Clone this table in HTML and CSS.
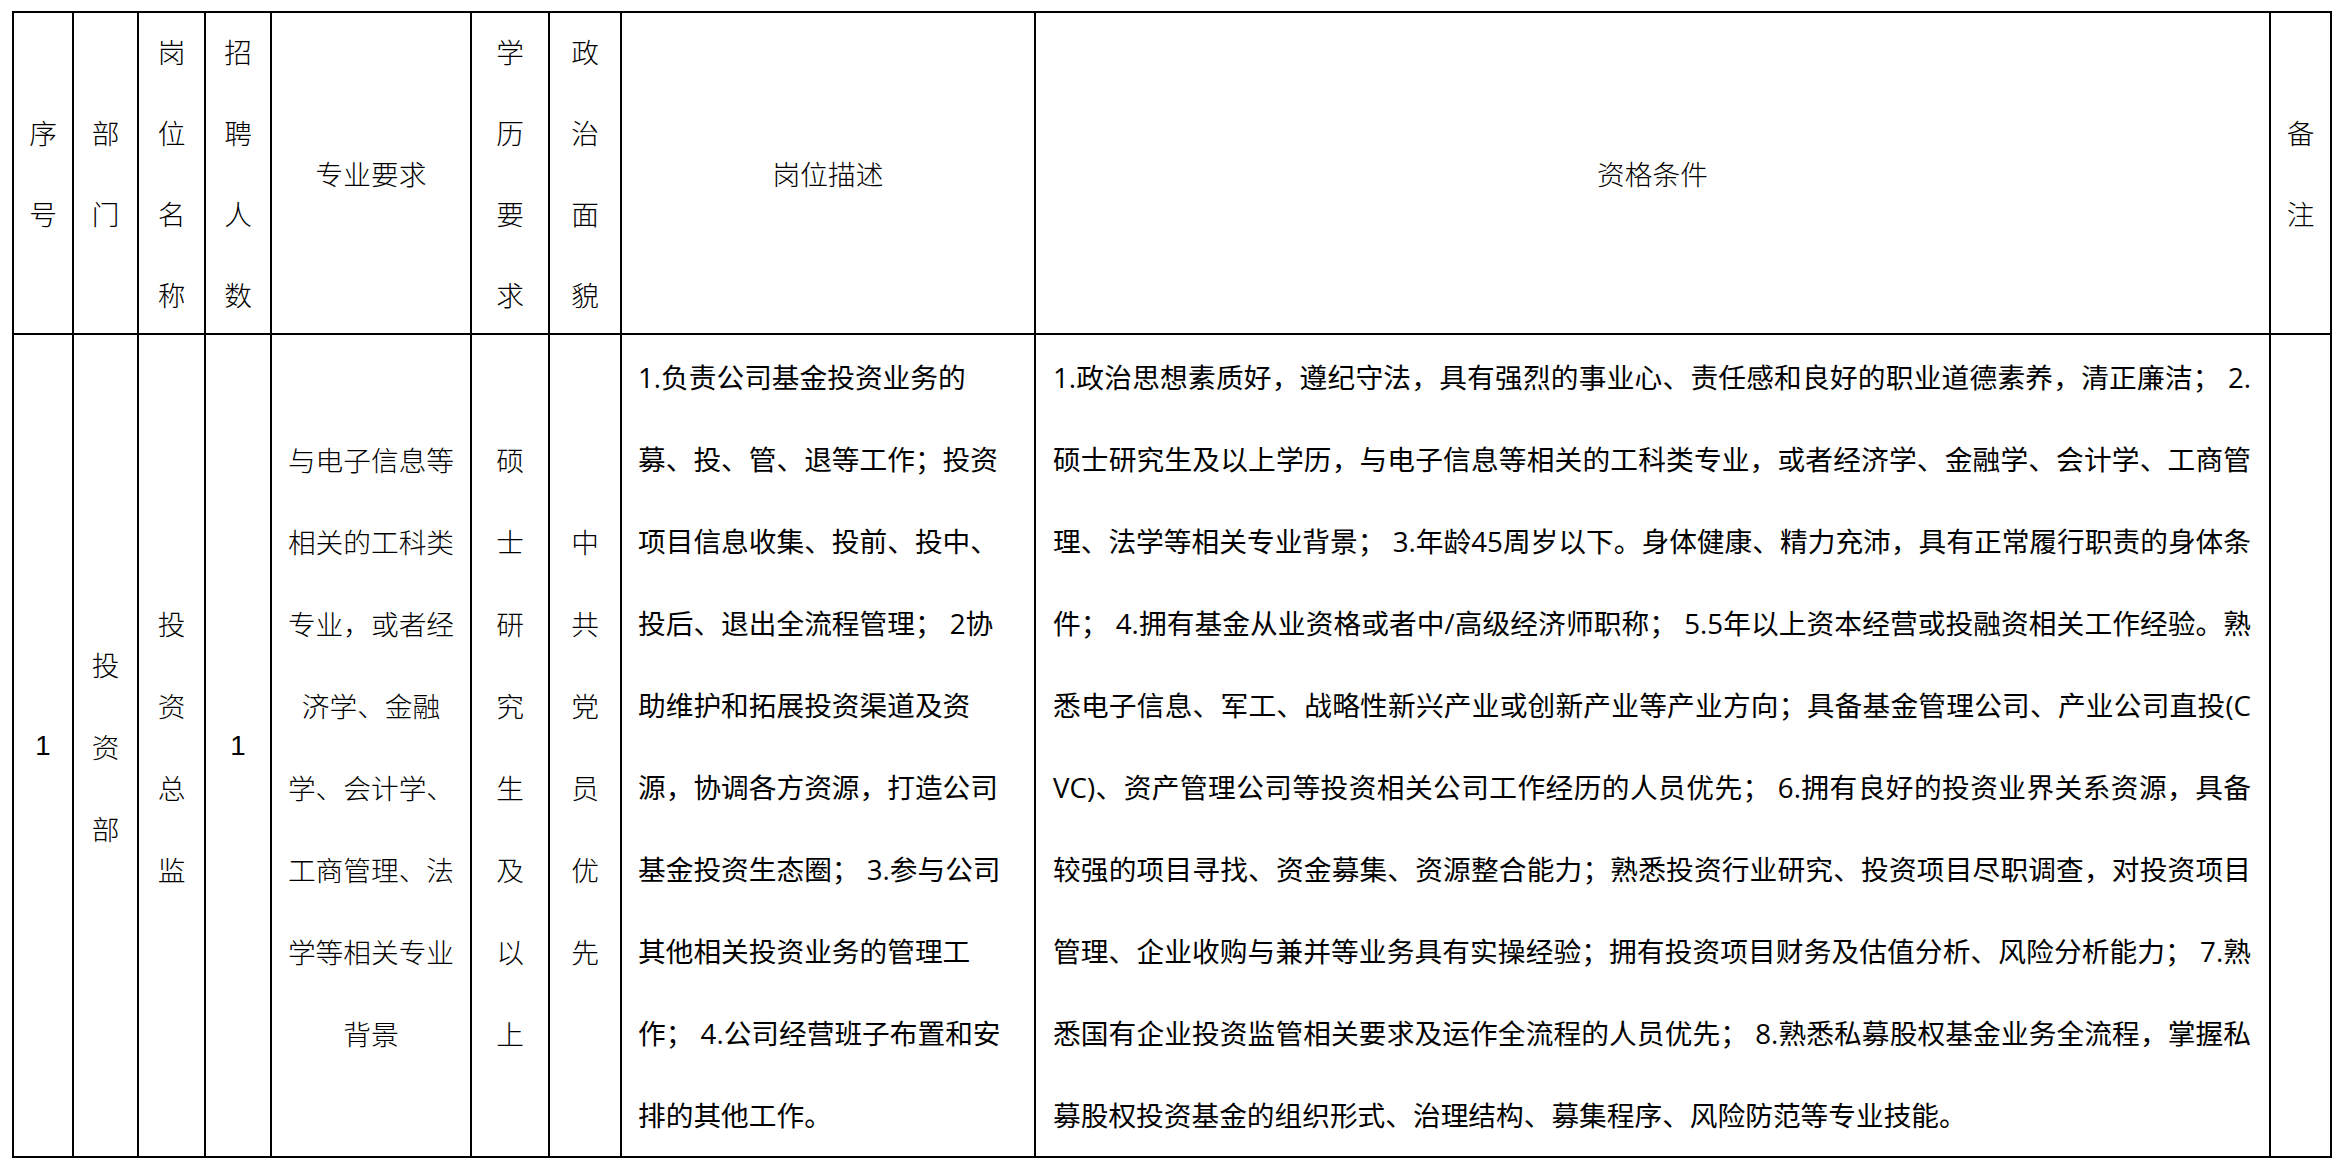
FILE: index.html
```html
<!DOCTYPE html>
<html lang="zh-CN">
<head>
<meta charset="utf-8">
<title>招聘岗位表</title>
<link rel="stylesheet" href="styles.css">
</head>
<body>
<div class="page">
  <div class="sheet">
    <div class="cell head song"><div class="v">序<br>号</div></div>
    <div class="cell head song"><div class="v">部<br>门</div></div>
    <div class="cell head song"><div class="v">岗<br>位<br>名<br>称</div></div>
    <div class="cell head song"><div class="v">招<br>聘<br>人<br>数</div></div>
    <div class="cell head song"><div class="v">专业要求</div></div>
    <div class="cell head song"><div class="v">学<br>历<br>要<br>求</div></div>
    <div class="cell head song"><div class="v">政<br>治<br>面<br>貌</div></div>
    <div class="cell head song"><div class="v">岗位描述</div></div>
    <div class="cell head song"><div class="v">资格条件</div></div>
    <div class="cell head song"><div class="v">备<br>注</div></div>

    <div class="cell body num"><div class="v">1</div></div>
    <div class="cell body song"><div class="v">投<br>资<br>部</div></div>
    <div class="cell body song"><div class="v">投<br>资<br>总<br>监</div></div>
    <div class="cell body num"><div class="v">1</div></div>
    <div class="cell body song"><div class="v">与电子信息等<br>相关的工科类<br>专业，或者经<br>济学、金融<br>学、会计学、<br>工商管理、法<br>学等相关专业<br>背景</div></div>
    <div class="cell body song"><div class="v">硕<br>士<br>研<br>究<br>生<br>及<br>以<br>上</div></div>
    <div class="cell body song"><div class="v">中<br>共<br>党<br>员<br>优<br>先</div></div>
    <div class="cell body desc">
      <div class="para">
        <div class="ln">1.负责公司基金投资业务的</div>
        <div class="ln">募、投、管、退等工作；投资</div>
        <div class="ln">项目信息收集、投前、投中、</div>
        <div class="ln">投后、退出全流程管理； 2协</div>
        <div class="ln">助维护和拓展投资渠道及资</div>
        <div class="ln">源，协调各方资源，打造公司</div>
        <div class="ln">基金投资生态圈； 3.参与公司</div>
        <div class="ln">其他相关投资业务的管理工</div>
        <div class="ln">作； 4.公司经营班子布置和安</div>
        <div class="ln">排的其他工作。</div>
      </div>
    </div>
    <div class="cell body qual">
      <div class="para">
        <div class="ln just">1.政治思想素质好，遵纪守法，具有强烈的事业心、责任感和良好的职业道德素养，清正廉洁； 2.</div>
        <div class="ln just">硕士研究生及以上学历，与电子信息等相关的工科类专业，或者经济学、金融学、会计学、工商管</div>
        <div class="ln just">理、法学等相关专业背景； 3.年龄45周岁以下。身体健康、精力充沛，具有正常履行职责的身体条</div>
        <div class="ln just">件； 4.拥有基金从业资格或者中/高级经济师职称； 5.5年以上资本经营或投融资相关工作经验。熟</div>
        <div class="ln just">悉电子信息、军工、战略性新兴产业或创新产业等产业方向；具备基金管理公司、产业公司直投(C</div>
        <div class="ln just">VC)、资产管理公司等投资相关公司工作经历的人员优先； 6.拥有良好的投资业界关系资源，具备</div>
        <div class="ln just">较强的项目寻找、资金募集、资源整合能力；熟悉投资行业研究、投资项目尽职调查，对投资项目</div>
        <div class="ln just">管理、企业收购与兼并等业务具有实操经验；拥有投资项目财务及估值分析、风险分析能力； 7.熟</div>
        <div class="ln just">悉国有企业投资监管相关要求及运作全流程的人员优先； 8.熟悉私募股权基金业务全流程，掌握私</div>
        <div class="ln">募股权投资基金的组织形式、治理结构、募集程序、风险防范等专业技能。</div>
      </div>
    </div>
    <div class="cell body song"><div class="v"></div></div>
  </div>
</div>
</body>
</html>
```

FILE: styles.css
```css
html, body {
  margin: 0;
  padding: 0;
  background: #ffffff;
}

.page {
  padding: 11px 0 0 12px;
}

.sheet {
  display: grid;
  grid-template-columns: 58px 63px 65px 64px 198px 76px 70px 412px 1233px 59px;
  grid-template-rows: 320px 821px;
  gap: 2px;
  width: max-content;
  background: #000000;
  border: 2px solid #000000;
  color: #000000;
  font-size: 27.7px;
}

.cell {
  background: #ffffff;
  display: flex;
  align-items: center;
  justify-content: center;
  overflow: visible;
  min-width: 0;
}

.head {
  line-height: 81px;
}

.body {
  line-height: 82px;
}

.v {
  text-align: center;
  white-space: nowrap;
}

.song {
  font-family: "Noto Sans CJK SC", sans-serif;
  font-weight: 300;
}

.num {
  font-family: "Liberation Sans", "Noto Sans CJK SC", sans-serif;
  font-weight: 400;
}

.desc,
.qual {
  justify-content: flex-start;
  font-family: "Open Sans", "Noto Sans CJK SC", sans-serif;
  font-weight: 400;
}

.desc {
  padding-left: 16px;
}

.qual {
  padding: 0 18px 0 17px;
}

.para {
  width: 100%;
}

.ln {
  white-space: nowrap;
  text-align: left;
}

.ln.just {
  white-space: normal;
  text-align: justify;
  text-align-last: justify;
  text-justify: inter-character;
}
```
